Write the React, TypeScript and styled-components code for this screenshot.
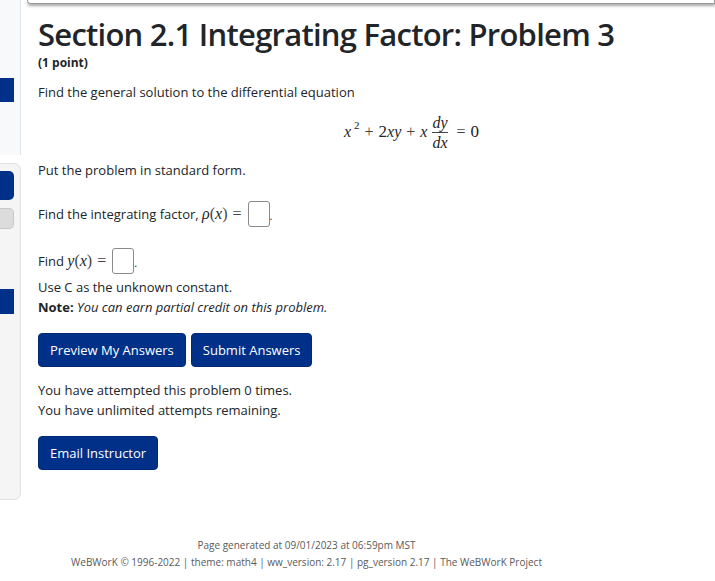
import React from "react";
import styled, { createGlobalStyle } from "styled-components";

const GlobalStyle = createGlobalStyle`
  html, body {
    margin: 0;
    padding: 0;
    background: #fff;
  }
  body {
    font-family: "Open Sans", "Noto Sans", sans-serif;
    color: #212529;
  }
`;

const Page = styled.div`
  display: flex;
  width: 715px;
  height: 581px;
  overflow: hidden;
`;

const Sidebar = styled.div`
  width: 21px;
  flex: none;
  display: flex;
  flex-direction: column;
`;

const SideTop = styled.div`
  height: 155px;
  background: #f8f9fa;
  border-right: 1px solid #e3e6e9;
  box-sizing: border-box;
  padding-top: 78px;
`;

const SidePanel = styled.div`
  margin-top: 8px;
  height: 337px;
  background: #f5f5f5;
  border: 1px solid #e2e2e2;
  border-left: none;
  border-radius: 0 7px 7px 0;
  box-sizing: border-box;
  padding-top: 7px;
  display: flex;
  flex-direction: column;
`;

const SideBlock = styled.div<{ $h: number; $tone: "blue" | "gray"; $mt?: number; $round?: boolean }>`
  width: 14px;
  height: ${(p) => p.$h}px;
  margin-top: ${(p) => p.$mt ?? 0}px;
  background: ${(p) => (p.$tone === "blue" ? "#003087" : "#dcdcdc")};
  border: ${(p) => (p.$tone === "gray" ? "1px solid #c8c8c8" : "none")};
  border-left: none;
  border-radius: ${(p) => (p.$round ? "0 5px 5px 0" : "0")};
  box-sizing: border-box;
`;

const Main = styled.div`
  flex: 1;
  display: flex;
  flex-direction: column;
  min-width: 0;
`;

const TopCard = styled.div`
  height: 3px;
  margin-left: 6px;
  border: 1px solid #9a9a9a;
  border-top: none;
  border-bottom-left-radius: 4px;
  box-shadow: 0 2px 3px rgba(0, 0, 0, 0.35);
`;

const Content = styled.div`
  padding-left: 17px;
  display: flex;
  flex-direction: column;
`;

const Title = styled.h1`
  margin: 13px 0 0;
  font-size: 31px;
  font-weight: 600;
  line-height: 34px;
  letter-spacing: -0.75px;
`;

const Points = styled.div`
  font-size: 12px;
  font-weight: 700;
  line-height: 16px;
  margin-top: 4px;
`;

const Para = styled.p<{ $mt?: number }>`
  margin: ${(p) => p.$mt ?? 0}px 0 0;
  font-size: 13px;
  line-height: 20px;
`;

const Display = styled.div`
  display: flex;
  justify-content: center;
  align-items: center;
  margin: 10px 0 0 70px;
  height: 40px;
  font-family: "Liberation Serif", "DejaVu Serif", serif;
  font-size: 17px;
`;

const MI = styled.span`
  font-style: italic;
  font-family: "Liberation Serif", "DejaVu Serif", serif;
  font-size: 16px;
`;

const MO = styled.span<{ $pad?: number }>`
  font-family: "Liberation Serif", "DejaVu Serif", serif;
  font-size: 16px;
  padding: 0 ${(p) => p.$pad ?? 5}px;
  color: #444;
`;

const Frac = styled.span`
  display: inline-flex;
  flex-direction: column;
  align-items: center;
  margin: 0 4px 0 5px;
  line-height: 17px;
`;

const FracBar = styled.span`
  align-self: stretch;
  height: 1px;
  background: #444;
  margin: 1px 0;
`;

const Sup = styled.span`
  display: inline-block;
  font-size: 11px;
  position: relative;
  top: -7px;
  margin-left: 3px;
`;

const AnswerLine = styled.div<{ $mt: number }>`
  display: flex;
  align-items: center;
  margin-top: ${(p) => p.$mt}px;
  font-size: 13px;
  height: 28px;
`;

const AnswerBox = styled.span`
  display: inline-block;
  width: 20px;
  height: 24px;
  border: 1px solid #8a8a8a;
  border-radius: 3px;
  margin-left: 1px;
  background: #fff;
`;

const Dot = styled.span`
  align-self: flex-end;
  margin-bottom: 5px;
  font-size: 11px;
`;

const Note = styled.p<{ $mt?: number }>`
  margin: ${(p) => p.$mt ?? 0}px 0 0;
  font-size: 13px;
  line-height: 20px;
  em {
    font-style: italic;
  }
`;

const ButtonRow = styled.div<{ $mt: number }>`
  display: flex;
  gap: 5px;
  margin-top: ${(p) => p.$mt}px;
`;

const Button = styled.button`
  background: #003087;
  color: #fff;
  border: 1px solid #002a78;
  border-radius: 4px;
  height: 34px;
  padding: 0 11px;
  font-family: "Open Sans", "Noto Sans", sans-serif;
  font-size: 13px;
`;

const Footer = styled.footer`
  margin-top: 67px;
  text-align: center;
  font-size: 10px;
  line-height: 17px;
  color: #5a5a5a;
  padding-right: 140px;
`;

export default function App() {
  return (
    <>
      <GlobalStyle />
      <Page>
        <Sidebar>
          <SideTop>
            <SideBlock $tone="blue" $h={24} />
          </SideTop>
          <SidePanel>
            <SideBlock $tone="blue" $h={29} $round />
            <SideBlock $tone="gray" $h={21} $mt={8} $round />
            <SideBlock $tone="blue" $h={25} $mt={60} />
          </SidePanel>
        </Sidebar>
        <Main>
          <TopCard />
          <Content>
            <Title>Section 2.1 Integrating Factor: Problem 3</Title>
            <Points>(1 point)</Points>
            <Para $mt={11}>Find the general solution to the differential equation</Para>
            <Display>
              <MI>x</MI>
              <Sup>2</Sup>
              <MO>+</MO>
              <span>2</span>
              <MI>xy</MI>
              <MO>+</MO>
              <MI>x</MI>
              <Frac>
                <MI>dy</MI>
                <FracBar />
                <MI>dx</MI>
              </Frac>
              <MO>=</MO>
              <span>0</span>
            </Display>
            <Para $mt={8}>Put the problem in standard form.</Para>
            <AnswerLine $mt={20}>
              Find the integrating factor,&nbsp;<MI>ρ</MI>
              <MO $pad={0}>(</MO>
              <MI>x</MI>
              <MO $pad={0}>)</MO>
              <MO>=</MO>
              <AnswerBox />
              <Dot>.</Dot>
            </AnswerLine>
            <AnswerLine $mt={19}>
              Find&nbsp;<MI>y</MI>
              <MO $pad={0}>(</MO>
              <MI>x</MI>
              <MO $pad={0}>)</MO>
              <MO>=</MO>
              <AnswerBox />
              <Dot>.</Dot>
            </AnswerLine>
            <Note $mt={2}>Use C as the unknown constant.</Note>
            <Note>
              <b>Note:</b> <em>You can earn partial credit on this problem.</em>
            </Note>
            <ButtonRow $mt={16}>
              <Button>Preview My Answers</Button>
              <Button>Submit Answers</Button>
            </ButtonRow>
            <Para $mt={13}>You have attempted this problem 0 times.</Para>
            <Para>You have unlimited attempts remaining.</Para>
            <ButtonRow $mt={16}>
              <Button>Email Instructor</Button>
            </ButtonRow>
            <Footer>
              <div>Page generated at 09/01/2023 at 06:59pm MST</div>
              <div>
                WeBWorK © 1996-2022 | theme: math4 | ww_version: 2.17 | pg_version 2.17 | The WeBWorK Project
              </div>
            </Footer>
          </Content>
        </Main>
      </Page>
    </>
  );
}
